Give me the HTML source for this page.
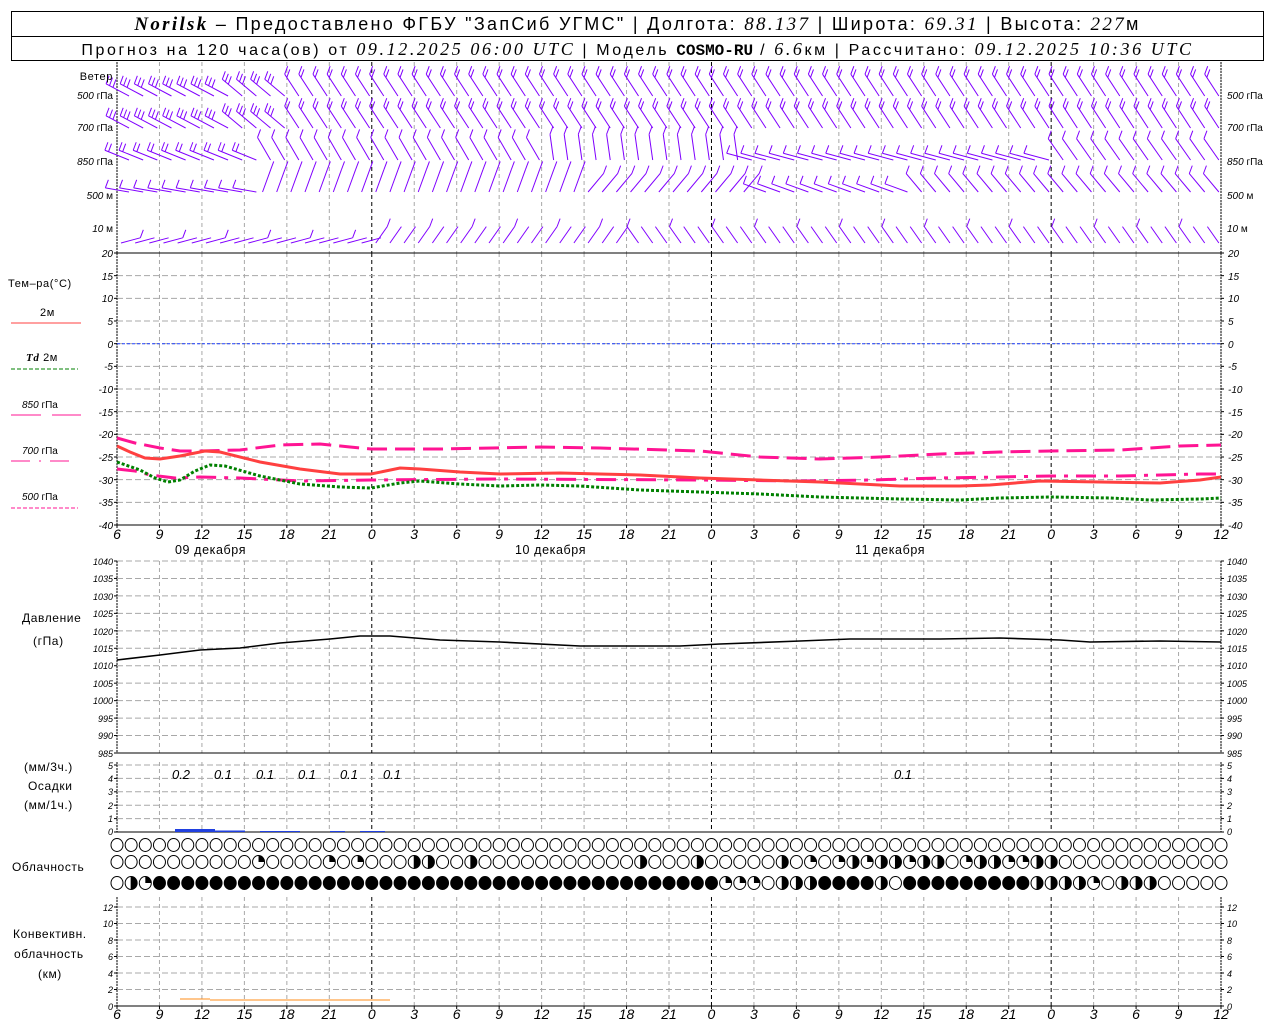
<!DOCTYPE html>
<html><head><meta charset="utf-8">
<style>
html,body{margin:0;padding:0;background:#fff;width:1280px;height:1024px;overflow:hidden}
svg{position:absolute;left:0;top:0}
.t{font-family:"Liberation Sans",sans-serif;font-size:10px;font-style:italic;fill:#000}
.l{font-family:"Liberation Sans",sans-serif;font-size:11px;fill:#000;letter-spacing:0.6px}
.h{font-family:"Liberation Sans",sans-serif;font-size:14px;font-style:italic;fill:#000}
#hdr{position:absolute;left:11px;top:11px;width:1253px;height:50px;border:1px solid #000;box-sizing:border-box;font-family:"Liberation Sans",sans-serif;color:#000}
#hdr div{height:24px;line-height:24px;text-align:center;white-space:nowrap}
#hdr .r1{font-size:18px;border-bottom:1px solid #000;letter-spacing:2.3px}
#hdr .r2{font-size:16px;letter-spacing:2.6px}
.i{font-family:"Liberation Serif",serif;font-style:italic;font-size:19px}
.b{font-family:"Liberation Mono",monospace;font-weight:bold;letter-spacing:0}
</style></head><body>
<div id="hdr">
<div class="r1"><span class="i" style="font-weight:bold">Norilsk</span> – Предоставлено ФГБУ "ЗапСиб УГМС" | Долгота: <span class="i">88.137</span> | Широта: <span class="i">69.31</span> | Высота: <span class="i">227</span>м</div>
<div class="r2">Прогноз на 120 часа(ов) от <span class="i" style="font-size:18px">09.12.2025 06:00 UTC</span> | Модель <span class="b">COSMO-RU</span> / <span class="i" style="font-size:18px">6.6</span>км | Рассчитано: <span class="i" style="font-size:18px">09.12.2025 10:36 UTC</span></div>
</div>
<svg id="s" width="1280" height="1024" xmlns="http://www.w3.org/2000/svg">
<g id="g"></g>
<text class="l" x="113" y="80" text-anchor="end">Ветер</text>
<text class="t" x="113" y="99" text-anchor="end">500 <tspan font-style="normal">гПа</tspan></text>
<text class="t" x="113" y="131" text-anchor="end">700 <tspan font-style="normal">гПа</tspan></text>
<text class="t" x="113" y="165" text-anchor="end">850 <tspan font-style="normal">гПа</tspan></text>
<text class="t" x="113" y="199" text-anchor="end">500 <tspan font-style="normal">м</tspan></text>
<text class="t" x="113" y="232" text-anchor="end">10 <tspan font-style="normal">  м</tspan></text>
<text class="t" x="1227" y="99">500 <tspan font-style="normal">гПа</tspan></text>
<text class="t" x="1227" y="131">700 <tspan font-style="normal">гПа</tspan></text>
<text class="t" x="1227" y="165">850 <tspan font-style="normal">гПа</tspan></text>
<text class="t" x="1227" y="199">500 <tspan font-style="normal">м</tspan></text>
<text class="t" x="1227" y="232">10 <tspan font-style="normal">  м</tspan></text>
<text class="l" x="8" y="287">Тем–ра(°С)</text>
<text class="l" x="40" y="316">2м</text>
<text class="l" x="26" y="361"><tspan font-family="Liberation Serif" font-style="italic" font-weight="bold">Td</tspan>  2м</text>
<text class="t" x="22" y="408">850 <tspan font-style="normal">гПа</tspan></text>
<text class="t" x="22" y="454">700 <tspan font-style="normal">гПа</tspan></text>
<text class="t" x="22" y="500">500 <tspan font-style="normal">гПа</tspan></text>
<line x1="11" y1="323" x2="81" y2="323" stroke="#ff4040" stroke-width="1"/>
<line x1="11" y1="369" x2="78" y2="369" stroke="#008000" stroke-dasharray="4,2"/>
<line x1="11" y1="415" x2="41" y2="415" stroke="#ff1493"/><line x1="52" y1="415" x2="81" y2="415" stroke="#ff1493"/>
<line x1="11" y1="461" x2="78" y2="461" stroke="#ff1493" stroke-dasharray="19,9,2,9"/>
<line x1="11" y1="508" x2="78" y2="508" stroke="#ff1493" stroke-dasharray="4,2"/>
<g class="t" text-anchor="end">
<text x="113" y="257">20</text><text x="113" y="280">15</text><text x="113" y="302">10</text><text x="113" y="325">5</text><text x="113" y="348">0</text><text x="113" y="370">-5</text><text x="113" y="393">-10</text><text x="113" y="416">-15</text><text x="113" y="438">-20</text><text x="113" y="461">-25</text><text x="113" y="484">-30</text><text x="113" y="506">-35</text><text x="113" y="529">-40</text>
</g>
<g class="t">
<text x="1228" y="257">20</text><text x="1228" y="280">15</text><text x="1228" y="302">10</text><text x="1228" y="325">5</text><text x="1228" y="348">0</text><text x="1228" y="370">-5</text><text x="1228" y="393">-10</text><text x="1228" y="416">-15</text><text x="1228" y="438">-20</text><text x="1228" y="461">-25</text><text x="1228" y="484">-30</text><text x="1228" y="506">-35</text><text x="1228" y="529">-40</text>
</g>
<g class="h" text-anchor="middle">
<text x="117" y="539">6</text><text x="159.5" y="539">9</text><text x="201.9" y="539">12</text><text x="244.4" y="539">15</text><text x="286.8" y="539">18</text><text x="329.3" y="539">21</text><text x="371.8" y="539">0</text><text x="414.2" y="539">3</text><text x="456.7" y="539">6</text><text x="499.1" y="539">9</text><text x="541.6" y="539">12</text><text x="584" y="539">15</text><text x="626.5" y="539">18</text><text x="669" y="539">21</text><text x="711.4" y="539">0</text><text x="753.9" y="539">3</text><text x="796.3" y="539">6</text><text x="838.8" y="539">9</text><text x="881.3" y="539">12</text><text x="923.7" y="539">15</text><text x="966.2" y="539">18</text><text x="1008.6" y="539">21</text><text x="1051.1" y="539">0</text><text x="1093.6" y="539">3</text><text x="1136" y="539">6</text><text x="1178.5" y="539">9</text><text x="1221" y="539">12</text>
</g>
<g class="h" text-anchor="middle">
<text x="117" y="1019">6</text><text x="159.5" y="1019">9</text><text x="201.9" y="1019">12</text><text x="244.4" y="1019">15</text><text x="286.8" y="1019">18</text><text x="329.3" y="1019">21</text><text x="371.8" y="1019">0</text><text x="414.2" y="1019">3</text><text x="456.7" y="1019">6</text><text x="499.1" y="1019">9</text><text x="541.6" y="1019">12</text><text x="584" y="1019">15</text><text x="626.5" y="1019">18</text><text x="669" y="1019">21</text><text x="711.4" y="1019">0</text><text x="753.9" y="1019">3</text><text x="796.3" y="1019">6</text><text x="838.8" y="1019">9</text><text x="881.3" y="1019">12</text><text x="923.7" y="1019">15</text><text x="966.2" y="1019">18</text><text x="1008.6" y="1019">21</text><text x="1051.1" y="1019">0</text><text x="1093.6" y="1019">3</text><text x="1136" y="1019">6</text><text x="1178.5" y="1019">9</text><text x="1221" y="1019">12</text>
</g>
<g class="l" style="font-size:12.5px">
<text x="175" y="554">09 декабря</text><text x="515" y="554">10 декабря</text><text x="855" y="554">11 декабря</text>
</g>
<text class="l" x="22" y="622" style="font-size:12px">Давление</text>
<text class="l" x="33" y="645" style="font-size:12px">(гПа)</text>
<g class="t" text-anchor="end" style="font-size:9px">
<text x="113" y="565">1040</text><text x="113" y="582">1035</text><text x="113" y="600">1030</text><text x="113" y="617">1025</text><text x="113" y="635">1020</text><text x="113" y="652">1015</text><text x="113" y="669">1010</text><text x="113" y="687">1005</text><text x="113" y="704">1000</text><text x="113" y="722">995</text><text x="113" y="739">990</text><text x="113" y="757">985</text>
</g>
<g class="t" style="font-size:9px">
<text x="1227" y="565">1040</text><text x="1227" y="582">1035</text><text x="1227" y="600">1030</text><text x="1227" y="617">1025</text><text x="1227" y="635">1020</text><text x="1227" y="652">1015</text><text x="1227" y="669">1010</text><text x="1227" y="687">1005</text><text x="1227" y="704">1000</text><text x="1227" y="722">995</text><text x="1227" y="739">990</text><text x="1227" y="757">985</text>
</g>
<text class="l" x="24" y="771" style="font-size:12px">(мм/3ч.)</text>
<text class="l" x="28" y="790" style="font-size:12px">Осадки</text>
<text class="l" x="24" y="809" style="font-size:12px">(мм/1ч.)</text>
<g class="t" text-anchor="end" style="font-size:9px">
<text x="113" y="769">5</text><text x="113" y="782">4</text><text x="113" y="795">3</text><text x="113" y="809">2</text><text x="113" y="822">1</text><text x="113" y="835">0</text>
</g>
<g class="t" style="font-size:9px">
<text x="1227" y="769">5</text><text x="1227" y="782">4</text><text x="1227" y="795">3</text><text x="1227" y="809">2</text><text x="1227" y="822">1</text><text x="1227" y="835">0</text>
</g>
<g class="h" text-anchor="middle" style="font-size:13px">
<text x="181" y="779">0.2</text><text x="223" y="779">0.1</text><text x="265" y="779">0.1</text><text x="307" y="779">0.1</text><text x="349" y="779">0.1</text><text x="392" y="779">0.1</text><text x="903" y="779">0.1</text>
</g>
<text class="l" x="12" y="871" style="font-size:12px">Облачность</text>
<text class="l" x="13" y="938" style="font-size:12px">Конвективн.</text>
<text class="l" x="14" y="958" style="font-size:12px">облачность</text>
<text class="l" x="38" y="978" style="font-size:12px">(км)</text>
<g class="t" text-anchor="end" style="font-size:9px">
<text x="113" y="911">12</text><text x="113" y="927">10</text><text x="113" y="944">8</text><text x="113" y="960">6</text><text x="113" y="977">4</text><text x="113" y="993">2</text><text x="113" y="1010">0</text>
</g>
<g class="t" style="font-size:9px">
<text x="1227" y="911">12</text><text x="1227" y="927">10</text><text x="1227" y="944">8</text><text x="1227" y="960">6</text><text x="1227" y="977">4</text><text x="1227" y="993">2</text><text x="1227" y="1010">0</text>
</g>
</svg>
<script>
(function(){
var g=document.getElementById('g'),NS='http://www.w3.org/2000/svg';
function el(n,a){var e=document.createElementNS(NS,n);for(var k in a)e.setAttribute(k,a[k]);g.appendChild(e);return e;}
function line(x1,y1,x2,y2,c,w,d){var a={x1:x1,y1:y1,x2:x2,y2:y2,stroke:c,'stroke-width':w||1};if(d)a['stroke-dasharray']=d;return el('line',a);}
var X0=117,X1=1221,P=14.154;
function X(h){return X0+h*P;}
var panels=[[62,253],[253,525],[561,753],[762,832],[897,1006]];
for(var h=0;h<=78;h+=3){var x=X(h);var zero=((h+6)%24==0);
 panels.forEach(function(p){line(x,p[0],x,p[1],zero?'#000':'#a8a8a8',1,'4,3');});}
function hgrid(y0,y1,n){for(var i=0;i<=n;i++){var y=y0+(y1-y0)*i/n;line(X0,y,X1,y,'#a8a8a8',1,'6,3');line(X0-3,y,X0,y,'#000');line(X1,y,X1+3,y,'#000');}}
hgrid(253,525,12);hgrid(561,753,11);hgrid(765,832,5);hgrid(907,1006,6);
panels.forEach(function(p){line(X0,p[0],X0,p[1],'#000',1,'2,1');line(X1,p[0],X1,p[1],'#000',1,'2,1');});
line(X0,253,X1,253,'#000');line(X0,525,X1,525,'#000');line(X0,753,X1,753,'#000');line(X0,832,X1,832,'#000');line(X0,1006,X1,1006,'#000');
for(var h=0;h<=78;h+=3){line(X(h),525,X(h),528,'#000');line(X(h),1006,X(h),1009,'#000');}
line(X0,343.7,X1,343.7,'#2040ff',1,'3,2');
function pl(pts,c,w,d){var s=pts.map(function(p){return p.join(',')}).join(' ');var a={points:s,fill:'none',stroke:c,'stroke-width':w};if(d)a['stroke-dasharray']=d;el('polyline',a);}
pl([[117,438],[135,443],[160,448],[180,451],[200,451],[240,450],[280,445],[320,444],[350,447],[371,449],[440,449],[540,447],[600,448],[700,451],[760,457],[820,459],[880,457],[940,454],[1000,452],[1051,451],[1120,450],[1180,446],[1221,445]],'#ff1493',3,'20,8');
pl([[117,469],[135,471],[150,475],[175,478],[200,477],[240,478],[300,481],[371,480],[500,479],[700,480],[800,481],[870,480],[940,478],[1000,477],[1051,476],[1120,476],[1200,474],[1221,474]],'#ff1493',3,'20,8,4,8');
pl([[117,446],[130,452],[145,458],[160,459],[180,456],[205,451],[220,452],[260,462],[300,469],[340,474],[371,474],[400,468],[420,469],[460,472],[500,474],[560,473],[600,474],[640,475],[700,478],[760,480],[820,482],[860,484],[900,486],[960,486],[990,485],[1040,481],[1100,482],[1160,483],[1200,480],[1221,477]],'#ff4040',3);
pl([[117,462],[140,470],[155,478],[168,482],[180,480],[195,471],[210,465],[225,466],[260,476],[300,484],[340,487],[371,488],[400,483],[420,481],[460,484],[500,486],[540,485],[580,486],[640,490],[700,492],[760,494],[820,497],[900,499],[960,500],[1000,498],[1051,497],[1110,498],[1150,500],[1200,499],[1221,498]],'#008000',3,'3,2');
pl([[117,660],[160,655],[200,650],[240,648],[280,643],[330,639],[360,636],[390,636],[440,640],[500,642],[580,646],[680,646],[720,644],[800,641],[850,639],[940,639],[1000,638],[1060,640],[1090,642],[1160,641],[1221,642]],'#000',1.6);
[[175,215,3],[215,245,1.5],[260,300,1],[330,345,1],[360,385,1]].forEach(function(b){el('rect',{x:b[0],y:832-b[2],width:b[1]-b[0],height:b[2],fill:'#2040e0'});});
line(180,999,210,999,'#ff8c1a',1);line(210,1000,390,1000,'#ff8c1a',1);
var r2='000000000'+'0q0000q0q000hh00h00000000000h000h00000h0q0qhqhhqhh0qhhqqhh00000000000000000000';
var r3='0hq'+'ffffffffffffffffffffffffffffffffffffffff'+'qqq0hhhffffh0fffffffff'+'hhhhq0hhh'+'000000000000000000';
function cloud(cx,cy,t){el('ellipse',{cx:cx,cy:cy,rx:6,ry:6.5,fill:t=='f'?'#000':'#fff',stroke:'#000','stroke-width':1});
 if(t=='h'){line(cx,cy-6.5,cx,cy+6.5,'#000');el('path',{d:'M'+cx+','+(cy-6.5)+' A6,6.5 0 0 1 '+cx+','+(cy+6.5)+' Z',fill:'#000'});}
 if(t=='q'){el('path',{d:'M'+cx+','+cy+' L'+cx+','+(cy-6.5)+' A6,6.5 0 0 1 '+(cx+6)+','+cy+' Z',fill:'#000'});}}
for(var i=0;i<79;i++){var x=X(i);cloud(x,845,'0');cloud(x,862,r2[i]||'0');cloud(x,883,r3[i]||'0');}
var C='#8000ff';
function barb(xb,yb,L,deg,nb){var a=deg*Math.PI/180;var xt=xb-L*Math.sin(a),yt=yb-L*Math.cos(a);
 line(xb,yb,xt,yt,C,1);
 for(var k=0;k<nb;k++){var f=k*0.15;var bx=xt+(xb-xt)*f,by=yt+(yb-yt)*f;line(bx,by,bx+3,by-8,C,1);}}
function ang(r,i){
 if(r==0||r==1){return i<8?62:(i<12?50:33);}
 if(r==2){if(i<10)return 68;if(i<30)return 30;if(i<44)return 8;if(i<66)return 75;return 35;}
 if(r==3){if(i<10)return 80;if(i<33)return -20;if(i<45)return -40;if(i<56)return 70;return 40;}
 if(i<18)return -75;if(i<36)return -35;return 35;}
var rows=[[96,26],[128,26],[160,26],[192,24],[243,20]];
for(var r=0;r<5;r++){for(var i=0;i<78;i++){var d=ang(r,i);var xb=X(i)+(d>0?12:4);
 var nb=r<2?(i<12?3:2):(r==2?(i<10?2:1):(r==3?1:(i%3==0?1:0)));
 barb(xb,rows[r][0],rows[r][1],d,nb);}}
})();
</script>
</body></html>
